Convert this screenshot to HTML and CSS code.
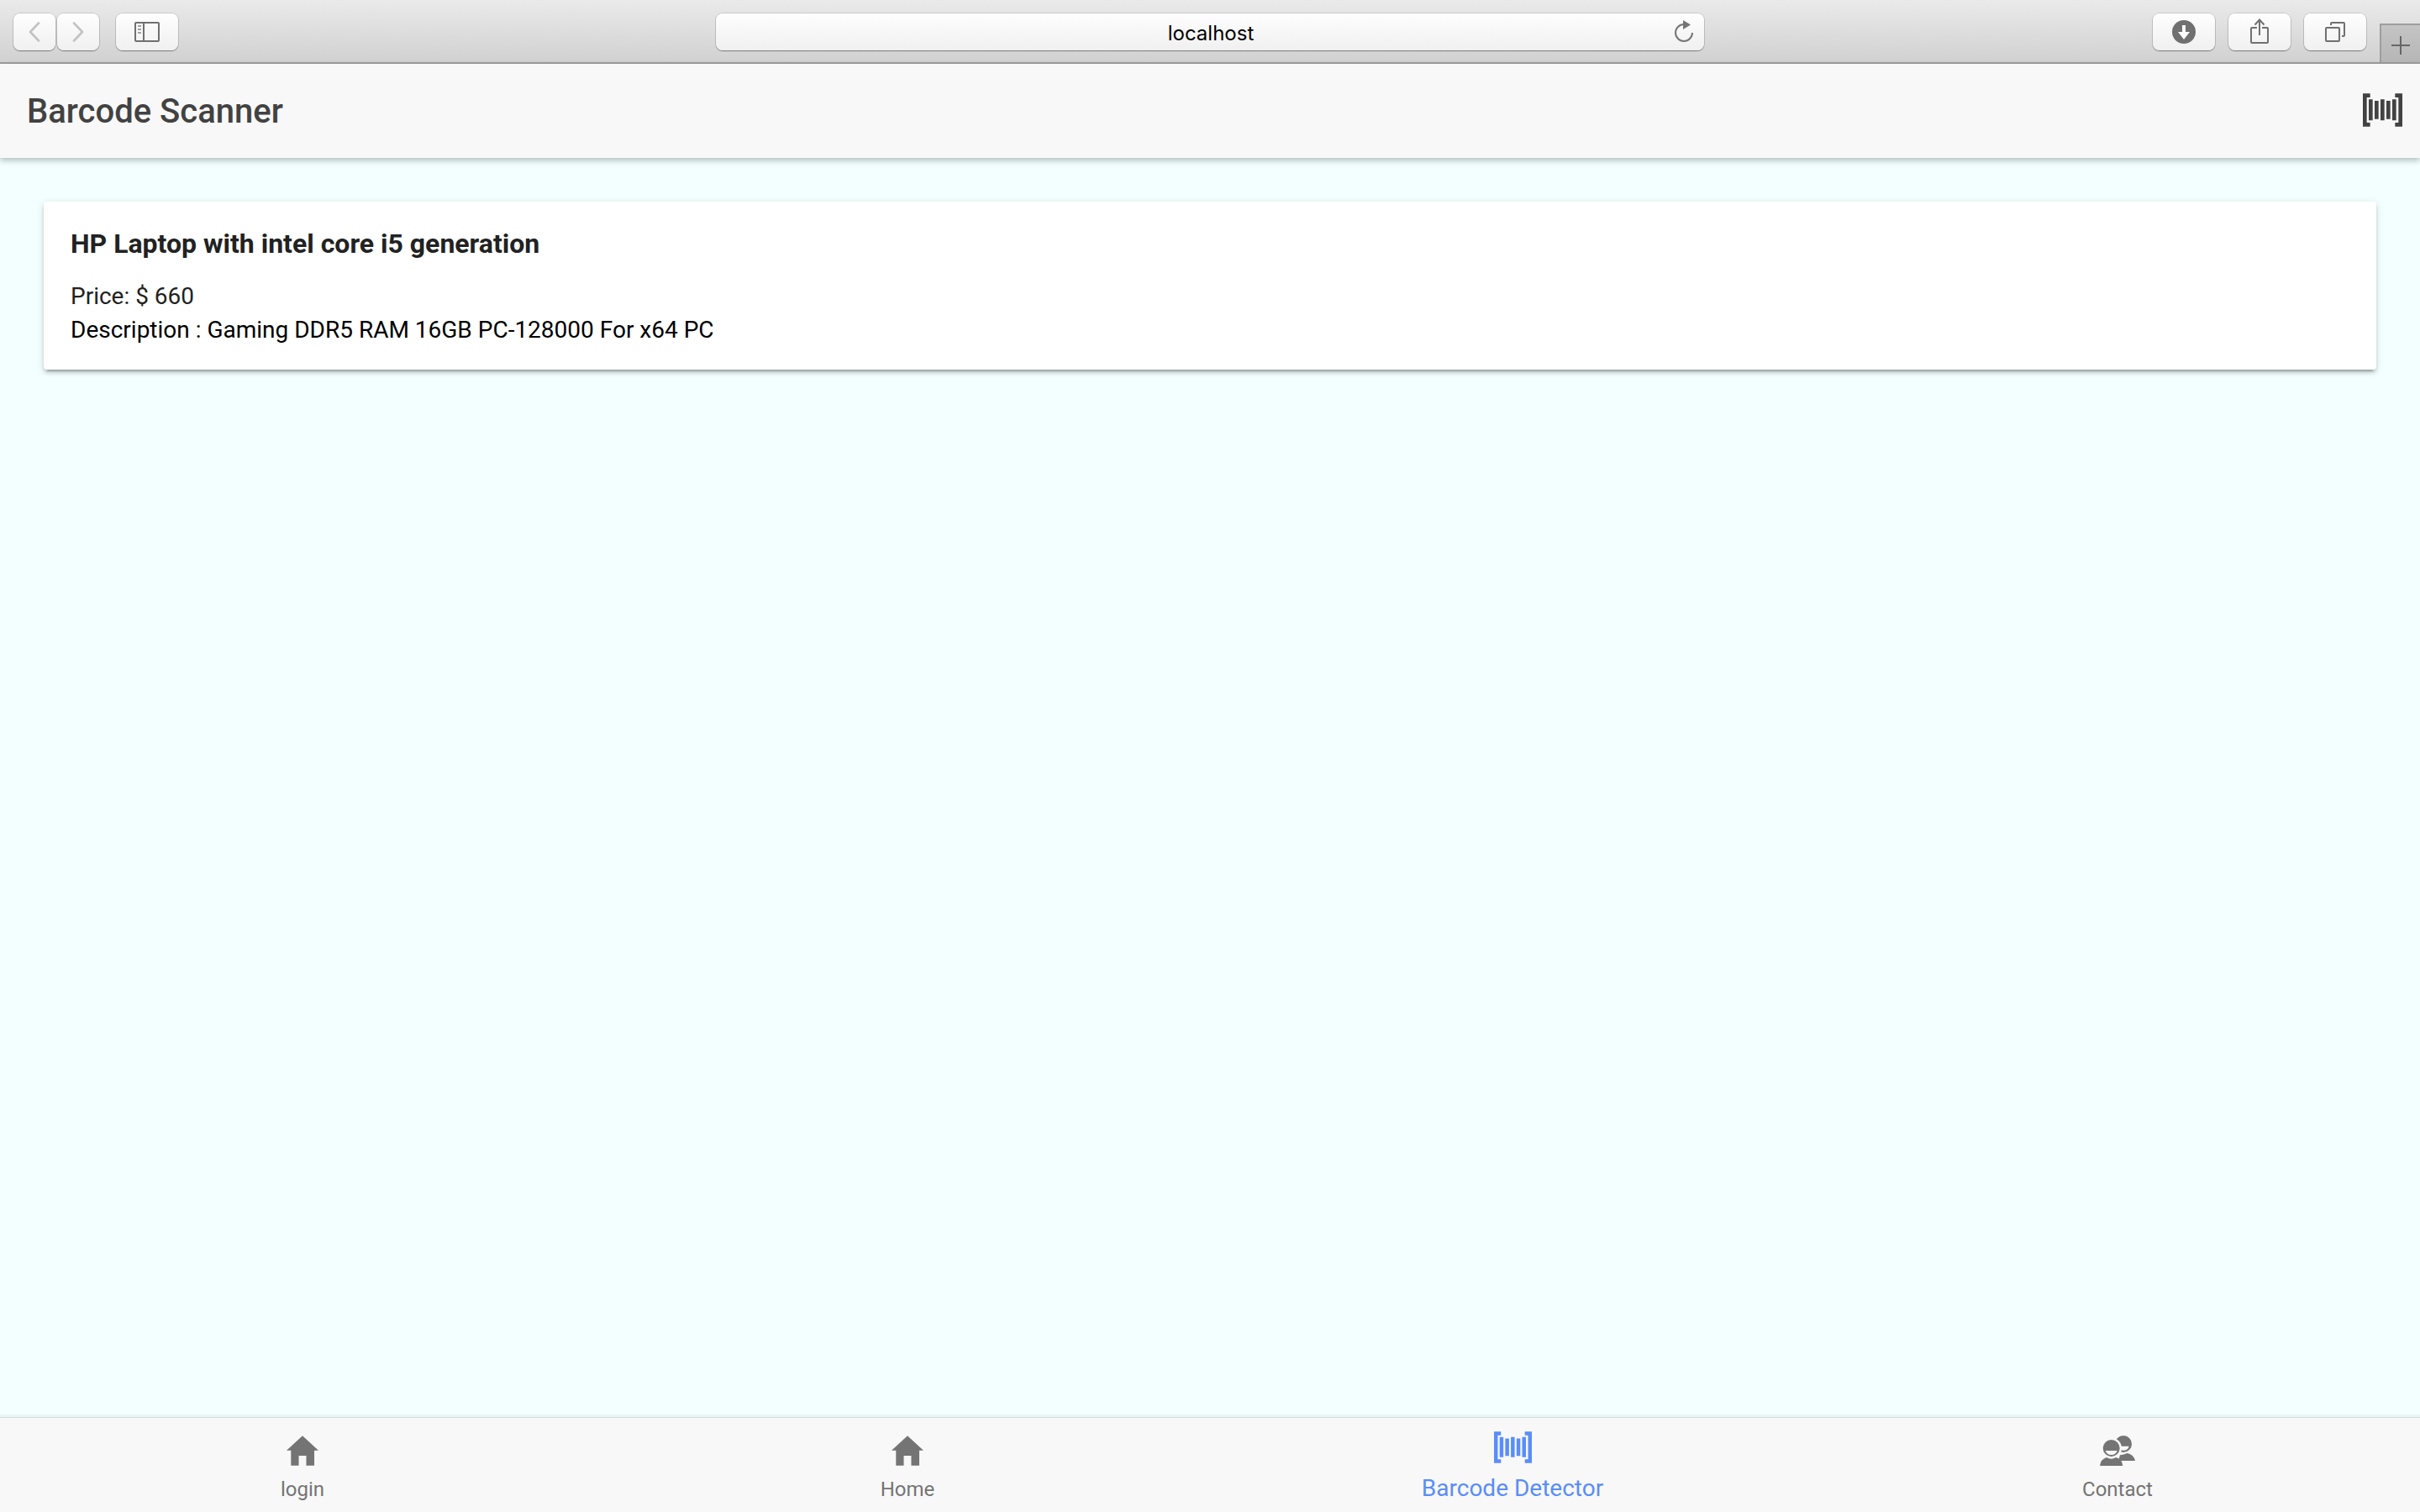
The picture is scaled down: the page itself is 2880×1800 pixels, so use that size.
FILE: index.html
```html
<!DOCTYPE html>
<html lang="en">
<head>
<meta charset="utf-8">
<title>Barcode Scanner</title>
<link rel="stylesheet" href="styles.css">
</head>
<body>
<svg class="sprite" aria-hidden="true">
  <symbol id="barcode" viewBox="0 0 141 118">
    <path d="M0 0H26V14H14V104H26V118H0ZM141 0H115V14H127V104H115V118H141ZM21 21h14v75H21ZM42 26h14v65H42ZM63 21h14v75H63ZM84 26h14v65H84ZM105 21h14v75H105Z"/>
  </symbol>
  <symbol id="home" viewBox="0 0 115 108">
    <path d="M57.500 0L115 53H100V108H71V72H44V108H16V53H0Z"/>
  </symbol>
</svg>

<div class="browser">
  <div class="browser-left">
    <div class="history">
      <button class="chrome-button chrome-narrow" aria-label="Back">
        <svg width="14" height="24" viewBox="0 0 14 24"><path d="M12 1.500L2 12L12 22.500" fill="none" stroke="#c2c2c2" stroke-width="2.600" stroke-linecap="round" stroke-linejoin="round"/></svg>
      </button>
      <button class="chrome-button chrome-narrow" aria-label="Forward">
        <svg width="14" height="24" viewBox="0 0 14 24"><path d="M2 1.500L12 12L2 22.500" fill="none" stroke="#c2c2c2" stroke-width="2.600" stroke-linecap="round" stroke-linejoin="round"/></svg>
      </button>
    </div>
    <button class="chrome-button" aria-label="Sidebar">
      <svg width="30" height="24" viewBox="0 0 30 24" fill="none" stroke="#707070" stroke-width="2"><rect x="1" y="1" width="28" height="22" rx="1"/><path d="M11 1V23"/><path d="M4 5H8M4 9H8M4 13H8" stroke="#a0a0a0"/></svg>
    </button>
  </div>
  <div class="address">
    <input class="address-input" type="text" value="localhost" aria-label="Address">
    <button class="reload" aria-label="Reload">
      <svg width="24" height="28" viewBox="0 0 24 28"><path d="M22 15A10 10 0 1 1 12 5" fill="none" stroke="#757575" stroke-width="2"/><path d="M11 0L20 5.500L11 11Z" fill="#757575"/></svg>
    </button>
  </div>
  <div class="browser-right">
    <button class="chrome-button" aria-label="Downloads">
      <svg width="28" height="28" viewBox="0 0 28 28"><circle cx="14" cy="14" r="14" fill="#707070"/><path d="M12 6h4v8h5L14 23L7 14h5Z" fill="#fafafa"/></svg>
    </button>
    <button class="chrome-button" aria-label="Share">
      <svg class="share" width="22" height="30" viewBox="0 0 22 30" fill="none" stroke="#707070" stroke-width="2"><path d="M8 11H2Q1 11 1 12V28Q1 29 2 29H20Q21 29 21 28V12Q21 11 20 11H14M11 20V1.500M5.500 7.500L11 1.500L16.500 7.500"/></svg>
    </button>
    <button class="chrome-button" aria-label="Show all tabs">
      <svg width="24" height="24" viewBox="0 0 24 24" fill="none" stroke="#707070" stroke-width="2"><rect x="1" y="7" width="16" height="16" rx="1"/><path d="M7 4V2Q7 1 8 1H22Q23 1 23 2V16Q23 17 22 17H20"/></svg>
    </button>
    <button class="new-tab" aria-label="New tab">
      <svg width="22" height="22" viewBox="0 0 22 22"><path d="M11 0V22M0 11H22" stroke="#666" stroke-width="2"/></svg>
    </button>
  </div>
</div>

<header class="header">
  <h1 class="header-title">Barcode Scanner</h1>
  <button class="scan" aria-label="Scan barcode"><svg width="47" height="40" fill="#424242"><use href="#barcode"/></svg></button>
</header>

<main class="content">
  <article class="card">
    <h2 class="card-title">HP Laptop with intel core i5 generation</h2>
    <p class="card-price">Price: $ 660</p>
    <p class="card-text">Description : Gaming DDR5 RAM 16GB PC-128000 For x64 PC</p>
  </article>
</main>

<nav class="tabs">
  <a class="tab" href="#login"><svg width="38" height="36"><use href="#home"/></svg>login</a>
  <a class="tab" href="#home-page"><svg width="38" height="36"><use href="#home"/></svg>Home</a>
  <a class="tab tab-active" href="#detector" aria-current="page"><svg width="45" height="38"><use href="#barcode"/></svg>Barcode Detector</a>
  <a class="tab" href="#contact">
    <svg width="42" height="36" viewBox="0 0 126 108">
      <circle cx="84" cy="30" r="30"/>
      <path d="M68 38H104Q100 53 84 53Q74 53 68 48Z" fill="#f8f8f8"/>
      <path d="M66 90L72 70Q84 69 98 63Q121 68 126 90Z"/>
      <circle cx="41" cy="45" r="37" fill="#f8f8f8"/>
      <circle cx="41" cy="45" r="30"/>
      <path d="M20 54H62Q57 69 41 69Q25 69 20 54Z" fill="#f8f8f8"/>
      <path d="M0 108Q3 84 24 78Q41 88 58 78Q79 84 82 108Z"/>
    </svg>Contact</a>
</nav>
</body>
</html>
```
FILE: styles.css
```css
* { box-sizing: border-box; }

body {
  margin: 0;
  min-height: 100vh;
  display: flex;
  flex-direction: column;
  background: #f3ffff;
  font-family: Roboto, "Liberation Sans", sans-serif;
  color: #000;
}

button {
  border: 0;
  padding: 0;
  background: none;
  font: inherit;
}

svg { display: block; }

.sprite {
  position: absolute;
  width: 0;
  height: 0;
}

/* Browser toolbar */
.browser {
  display: grid;
  grid-template-columns: 1fr minmax(0, 1176px) 1fr;
  height: 76px;
  border-bottom: 2px solid #9e9e9e;
  background: linear-gradient(#eaeaea, #d1d1d1);
}

.browser-left,
.browser-right {
  display: flex;
  align-items: flex-start;
}

.browser-left {
  gap: 20px;
  padding: 16px 0 0 16px;
}

.browser-right {
  justify-content: flex-end;
  gap: 16px;
  padding-top: 16px;
}

.history {
  display: flex;
  gap: 2px;
}

.chrome-button,
.address {
  height: 44px;
  border-radius: 8px;
  background: linear-gradient(#fefefe, #f0f0f0);
  box-shadow: 0 0 0 1px rgba(0, 0, 0, 0.12), 0 1px 1px rgba(0, 0, 0, 0.35);
}

.chrome-button {
  width: 74px;
  display: flex;
  align-items: center;
  justify-content: center;
}

.chrome-narrow { width: 50px; }

.share { margin-bottom: 2px; }

.address {
  display: flex;
  align-items: center;
  margin-top: 16px;
  padding: 0 12px 0 38px;
}

.address-input {
  flex: 1;
  min-width: 0;
  height: 44px;
  padding: 2px 0 0;
  border: 0;
  background: none;
  font: 24px Inter, sans-serif;
  color: #000;
  text-align: center;
}

.new-tab {
  align-self: flex-end;
  width: 48px;
  height: 46px;
  padding-top: 4px;
  border-top: 2px solid #9e9e9e;
  border-left: 2px solid #9e9e9e;
  background: linear-gradient(#c4c4c4, #b6b6b6);
  display: flex;
  align-items: center;
  justify-content: center;
}

/* App header */
.header {
  display: flex;
  align-items: center;
  justify-content: space-between;
  height: 112px;
  padding: 0 21px 0 32px;
  background: #f8f8f8;
  box-shadow: 0 3px 7px rgba(0, 20, 20, 0.28);
}

.header-title {
  margin: 0;
  font-size: 40px;
  font-weight: 500;
  color: #424242;
}

.scan { margin-bottom: 2px; }

/* Content */
.content {
  flex: 1;
  padding: 52px;
}

.card {
  padding: 30px 32px 27px;
  border-radius: 4px;
  background: #fff;
  font-size: 28px;
  line-height: 40px;
  box-shadow: 0 4px 4px rgba(0, 0, 0, 0.14), 0 6px 2px -4px rgba(0, 0, 0, 0.2), 0 2px 10px rgba(0, 0, 0, 0.12);
}

.card-title {
  margin: 0 0 23px;
  font-size: 32px;
  line-height: 40px;
  font-weight: 700;
  color: #222;
}

.card-price {
  margin: 0;
  color: #222;
}

.card-text { margin: 0; }

/* Bottom tabs */
.tabs {
  display: grid;
  grid-template-columns: repeat(4, 1fr);
  height: 112px;
  background: #f8f8f8;
  box-shadow: 0 -1px 0 #d3dddd, 0 -4px 0 #e8f5f5;
}

.tab {
  display: flex;
  flex-direction: column;
  align-items: center;
  justify-content: flex-end;
  gap: 14px;
  padding-bottom: 13px;
  font-size: 24px;
  line-height: 28px;
  color: #747474;
  fill: #747474;
  text-decoration: none;
}

.tab-active {
  padding-bottom: 12px;
  font-size: 28px;
  line-height: 32px;
  color: #5a8df8;
  fill: #5a8df8;
}
```
